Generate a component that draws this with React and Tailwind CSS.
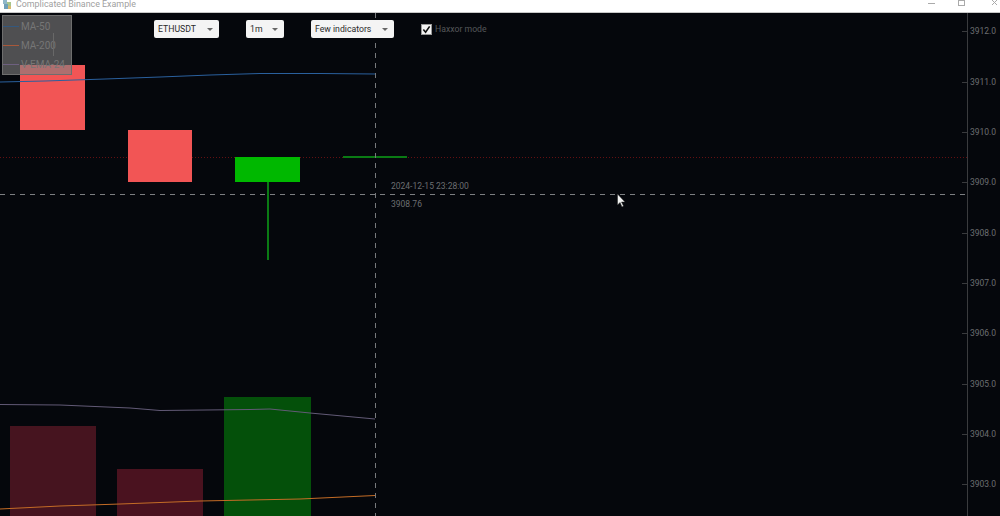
const ticks = [
  ['3912.0', 31], ['3911.0', 82], ['3910.0', 132], ['3909.0', 182], ['3908.0', 233],
  ['3907.0', 283], ['3906.0', 333], ['3905.0', 384], ['3904.0', 434], ['3903.0', 484],
];

function Chart() {
  return (
    <svg className="absolute inset-0 w-full h-full" viewBox="0 13 1000 503" shapeRendering="crispEdges">
      {/* volume bars */}
      <rect x="10" y="426" width="86" height="90" fill="#46141f" />
      <rect x="117" y="469" width="86" height="47" fill="#4a121f" />
      <rect x="224" y="397" width="87" height="119" fill="#04500a" />
      {/* price line */}
      <line x1="0" y1="157.5" x2="967" y2="157.5" stroke="#b01818" strokeOpacity="0.55" strokeDasharray="1 2" />
      {/* candles */}
      <rect x="20" y="65" width="65" height="65" fill="#f25555" />
      <rect x="128" y="130" width="64" height="52" fill="#f25555" />
      <rect x="235" y="157" width="65" height="25" fill="#00b800" />
      <line x1="268" y1="182" x2="268" y2="260" stroke="#0a7a14" strokeWidth="2" />
      <line x1="343" y1="157" x2="407" y2="157" stroke="#0a7a14" strokeWidth="2" />
      {/* moving averages */}
      <g fill="none" shapeRendering="geometricPrecision">
        <polyline points="0,82 45,81 105,79 160,77 210,75 260,73.5 320,73.5 375,74" stroke="#2a609e" strokeWidth="1" />
        <polyline points="0,404.5 60,405 130,408 160,410.5 250,409.5 270,409 310,413 375,419" stroke="#625a76" strokeWidth="1" />
        <polyline points="0,509 60,506 120,504 200,501 300,499 375,495.5" stroke="#c46c26" strokeWidth="1" />
      </g>
      {/* crosshair */}
      <line x1="375.5" y1="13" x2="375.5" y2="516" stroke="#77797c" strokeDasharray="5 5" />
      <line x1="0" y1="194.5" x2="967" y2="194.5" stroke="#7d7f82" strokeDasharray="5 5" />
      {/* axis */}
      <line x1="967.5" y1="13" x2="967.5" y2="516" stroke="#3a3b3e" />
      {ticks.map(([t, y]) => (
        <line key={t} x1="962" y1={y + 0.5} x2="967" y2={y + 0.5} stroke="#3a3b3e" />
      ))}
      {/* cursor */}
      <path d="M617.5 194 L617.5 205 L620 202.5 L622 207 L623.5 206 L621.5 202 L625 202 Z" fill="#f2f2f2" stroke="#222" strokeWidth="0.5" shapeRendering="geometricPrecision" />
    </svg>
  );
}

function Select({ label, className }) {
  return (
    <div className={`flex items-center justify-between h-[18px] bg-[#f4f4f4] rounded-[2px] pl-1 pr-[6px] text-[#2a2a2a] ${className}`}>
      <span>{label}</span>
      <span className="w-0 h-0 border-x-[3px] border-x-transparent border-t-[3px] border-t-[#666]" />
    </div>
  );
}

function LegendRow({ color, label }) {
  return (
    <div className="flex items-center h-[19px] gap-[2px]">
      <span className="w-4 h-px" style={{ backgroundColor: color }} />
      <span>{label}</span>
    </div>
  );
}

export default function App() {
  return (
    <div className="w-[1000px] h-[516px] flex flex-col overflow-hidden bg-[#05070c] font-['Roboto',sans-serif]">
      <header className="h-[13px] shrink-0 bg-white flex items-start border-b border-[#c8c8c8]">
        <svg className="w-[11px] h-[10px] ml-[2px] shrink-0" viewBox="0 0 11 10">
          <rect x="1" y="0" width="4" height="4" fill="#8fb7c9" />
          <rect x="5" y="2" width="4" height="4" fill="#a8c48a" />
          <rect x="2" y="4" width="4" height="5" fill="#6f9fb8" />
          <rect x="6" y="6" width="3" height="3" fill="#d8b870" />
        </svg>
        <span className="ml-[3px] text-[8.9px] leading-[9px] text-[#a0a0a0] whitespace-nowrap">Complicated Binance Example</span>
        <div className="ml-auto flex items-start">
          <span className="w-[7px] h-px bg-[#aaa] mt-[3px] mr-[23px]" />
          <span className="w-[7px] h-[6px] border border-[#aaa] mr-[26px]" />
          <svg viewBox="0 0 8 6" className="w-2 h-[6px] mr-px" aria-label="Close">
            <path d="M1 0 L6 5 M6 0 L1 5" stroke="#aaa" strokeWidth="1" fill="none" />
          </svg>
        </div>
      </header>

      <main className="relative flex-1">
        <Chart />

        {/* legend */}
        <div className="absolute left-[2px] top-[2px] w-[70px] h-[60px] bg-[#808080]/60 border border-[#6e6e6e] text-[10px] leading-none text-[#767676] pt-[1px]">
          <LegendRow color="#34587e" label="MA-50" />
          <LegendRow color="#a8583a" label="MA-200" />
          <LegendRow color="#6e6080" label="V-EMA-24" />
          <span className="absolute left-[50px] top-[17px] w-px h-[23px] bg-[#686868]" />
        </div>

        {/* toolbar */}
        <div className="absolute left-[154px] top-[7px] flex items-center text-[8.7px] leading-none">
          <Select label="ETHUSDT" className="w-[65px]" />
          <Select label="1m" className="w-[38px] ml-[27px]" />
          <Select label="Few indicators" className="w-[83px] ml-[27px]" />
          <div className="ml-[27px] w-[11px] h-[11px] bg-[#f4f4f4] border border-[#999] flex items-center justify-center">
            <svg viewBox="0 0 10 10" className="w-[9px] h-[9px]"><path d="M1.5 5 L4 8 L8.5 1.5" fill="none" stroke="#111" strokeWidth="1.8" /></svg>
          </div>
          <span className="ml-[3px] text-[#55575a]">Haxxor mode</span>
        </div>

        {/* crosshair readout */}
        <div className="absolute left-[391px] top-[167px] text-[8.5px] leading-[12px] text-[#6c6e71]">2024-12-15 23:28:00</div>
        <div className="absolute left-[391px] top-[185px] text-[8.5px] leading-[12px] text-[#6c6e71]">3908.76</div>

        {/* axis labels */}
        {ticks.map(([t, y]) => (
          <span key={t} className="absolute left-[970px] text-[8.5px] leading-[12px] text-[#6c6e71]" style={{ top: y - 19 }}>{t}</span>
        ))}
      </main>
    </div>
  );
}
